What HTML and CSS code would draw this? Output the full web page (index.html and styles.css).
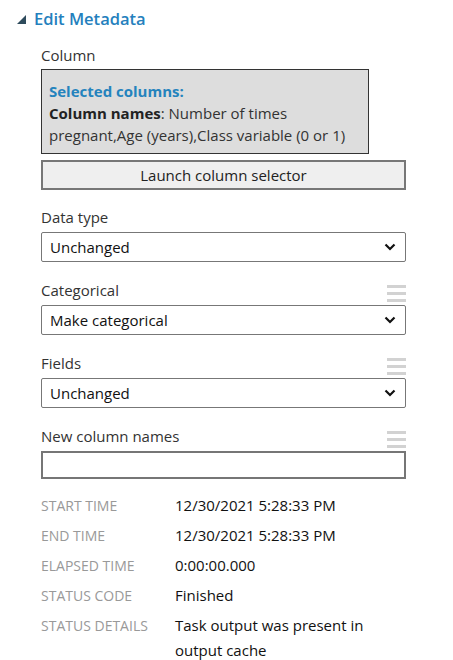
FILE: index.html
```html
<!DOCTYPE html>
<html>
<head>
<meta charset="utf-8">
<link rel="stylesheet" href="styles.css">
</head>
<body>
<div class="panel">
  <div class="header">
    <svg class="caret" width="9" height="9" viewBox="0 0 9 9"><polygon points="9,0 9,9 0,9" fill="#2e4b5c"/></svg>
    <span class="title">Edit Metadata</span>
  </div>
  <div class="content">
    <div class="label">Column</div>
    <div class="selected">
      <div class="sel-title">Selected columns:</div>
      <div><b>Column names</b>: Number of times pregnant,Age (years),Class variable (0 or 1)</div>
    </div>
    <div class="button">Launch column selector</div>

    <div class="label gap">Data type</div>
    <div class="select"><span>Unchanged</span><svg width="12" height="8" viewBox="0 0 12 8"><polyline points="1.5,1.5 6,6 10.5,1.5" fill="none" stroke="#111" stroke-width="2.2"/></svg></div>

    <div class="label gap row"><span>Categorical</span><span class="burger"><i></i><i></i><i></i></span></div>
    <div class="select"><span>Make categorical</span><svg width="12" height="8" viewBox="0 0 12 8"><polyline points="1.5,1.5 6,6 10.5,1.5" fill="none" stroke="#111" stroke-width="2.2"/></svg></div>

    <div class="label gap row"><span>Fields</span><span class="burger"><i></i><i></i><i></i></span></div>
    <div class="select"><span>Unchanged</span><svg width="12" height="8" viewBox="0 0 12 8"><polyline points="1.5,1.5 6,6 10.5,1.5" fill="none" stroke="#111" stroke-width="2.2"/></svg></div>

    <div class="label gap row"><span>New column names</span><span class="burger"><i></i><i></i><i></i></span></div>
    <div class="input"></div>

    <div class="meta">
      <div class="k">START TIME</div><div class="v">12/30/2021 5:28:33 PM</div>
      <div class="k">END TIME</div><div class="v">12/30/2021 5:28:33 PM</div>
      <div class="k">ELAPSED TIME</div><div class="v">0:00:00.000</div>
      <div class="k">STATUS CODE</div><div class="v">Finished</div>
      <div class="k">STATUS DETAILS</div><div class="v">Task output was present in output cache</div>
    </div>
  </div>
</div>
</body>
</html>
```
FILE: styles.css
```css
* { box-sizing: border-box; }
html, body { margin: 0; padding: 0; background: #fff; }
body {
  font-family: "Open Sans", "Noto Sans", sans-serif;
  font-size: 15px;
  color: #222;
  width: 453px;
  height: 660px;
  overflow: hidden;
}
.panel { padding-top: 6px; }
.header {
  display: flex;
  align-items: center;
  height: 24px;
  padding-left: 17px;
}
.caret { margin-right: 8px; margin-top: 2px; }
.title {
  font-size: 16.5px;
  font-weight: 600;
  color: #2480bd;
}
.content {
  margin-left: 41px;
  width: 365px;
  display: flex;
  flex-direction: column;
  margin-top: 14px;
}
.label {
  height: 22px;
  line-height: 22px;
  color: #333;
  margin-bottom: 3px;
}
.label.gap { margin-top: 16px; margin-bottom: 4px; }
.select + .label.gap { margin-top: 17px; }
.label.row { display: flex; justify-content: space-between; align-items: center; }
.burger {
  display: flex;
  flex-direction: column;
  gap: 4px;
  width: 19px;
  margin-top: 6px;
}
.burger i { display: block; height: 3px; background: #d2d2d2; }
.selected {
  width: 328px;
  background: #dddddd;
  border: 1px solid #333;
  padding: 10px 7px 7px 7px;
  line-height: 22px;
  color: #333;
}
.selected b { color: #222; font-weight: 700; }
.sel-title { color: #2483bd; font-weight: 700; }
.button {
  margin-top: 6px;
  height: 30px;
  border: 2px solid #777;
  background: #efefef;
  text-align: center;
  line-height: 26px;
  color: #222;
}
.select {
  height: 30px;
  border: 1px solid #777;
  border-radius: 2px;
  display: flex;
  align-items: center;
  justify-content: space-between;
  padding: 0 9px 0 8px;
  color: #111;
}
.select svg { display: block; }
.input {
  height: 28px;
  border: 2px solid #767676;
}
.meta {
  display: grid;
  grid-template-columns: 134px 1fr;
  row-gap: 5px;
  margin-top: 14px;
  line-height: 25px;
}
.k { color: #999; font-size: 14px; }
.v { color: #111; }
```
